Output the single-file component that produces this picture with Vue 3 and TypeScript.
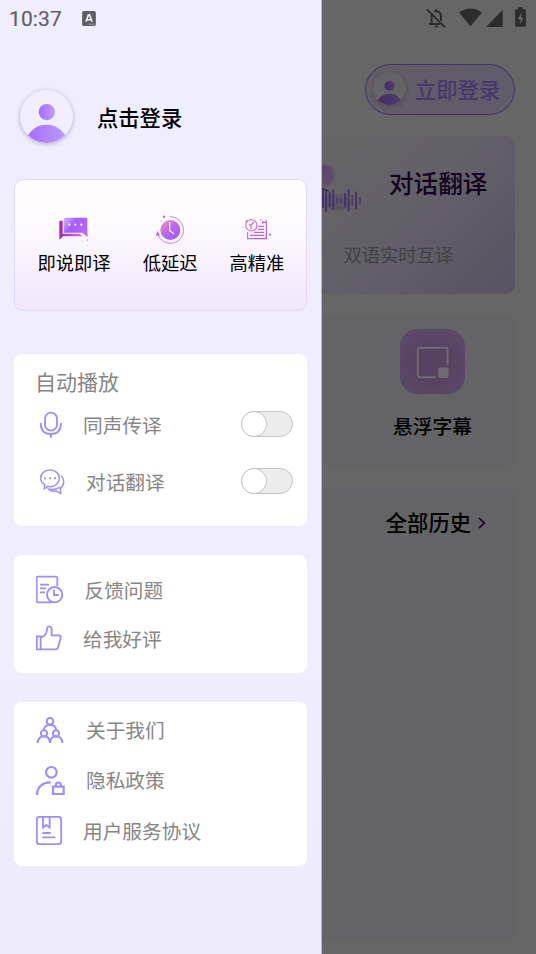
<script setup lang="ts">
import { ref } from 'vue'

interface Toggle {
  id: 'mic' | 'chat'
  label: string
}
interface Entry {
  id: string
  label: string
}

const toggles: Toggle[] = [
  { id: 'mic', label: '同声传译' },
  { id: 'chat', label: '对话翻译' },
]
const support: Entry[] = [
  { id: 'feedback', label: '反馈问题' },
  { id: 'rate', label: '给我好评' },
]
const legal: Entry[] = [
  { id: 'about', label: '关于我们' },
  { id: 'privacy', label: '隐私政策' },
  { id: 'terms', label: '用户服务协议' },
]
const enabled = ref<Record<Toggle['id'], boolean>>({ mic: false, chat: false })
</script>

<template>
  <div class="screen">
    <aside class="drawer">
      <div class="status">
        <span class="time">10:37</span>
        <svg class="lang" viewBox="0 0 42 46">
          <rect width="42" height="46" rx="5" fill="#5f5e66" />
          <path d="M12 33 19 12h4l7 21M14.500 27h13" fill="none" stroke="#f0edff" stroke-width="5" />
          <path d="M21 40.500h18" stroke="#d6d3e2" stroke-width="2.500" stroke-dasharray="3 1.500" />
        </svg>
      </div>

      <div class="profile">
        <svg class="avatar" viewBox="0 0 156 156">
          <defs>
            <linearGradient id="av" x1="0" y1="0" x2="1" y2="0">
              <stop offset="0" stop-color="#a66cfb" /><stop offset="1" stop-color="#bd9bff" />
            </linearGradient>
            <clipPath id="avc"><circle cx="78" cy="78" r="78" /></clipPath>
          </defs>
          <circle cx="79" cy="65" r="24" fill="url(#av)" />
          <path clip-path="url(#avc)" d="M20 140C34 114 52 102 78 102S122 114 138 140V160H20Z" fill="url(#av)" />
        </svg>
        <span class="profile-name">点击登录</span>
      </div>

      <section class="features">
        <div class="feature">
          <svg viewBox="147 132 90 90">
            <defs>
              <linearGradient id="c1" x1="0" y1="0" x2="1" y2=".6">
                <stop offset="0" stop-color="#d9b8fb" /><stop offset=".45" stop-color="#a45cfc" /><stop offset="1" stop-color="#b968f3" />
              </linearGradient>
              <linearGradient id="c2" x1="0" y1="0" x2="1" y2="0">
                <stop offset="0" stop-color="#a425b4" /><stop offset="1" stop-color="#d47be8" />
              </linearGradient>
            </defs>
            <path d="M148 155q0-3 3-3h7v39h51l9 8h-59l-11 10Z" fill="url(#c2)" />
            <path d="M165 143h63q4 0 4 4v53l-14-12h-57v-41q0-4 4-4Z" fill="url(#c1)" />
            <path d="M219 188h13v12Z" fill="#cf62dc" />
            <g fill="#fff"><circle cx="178" cy="164" r="3.200" /><circle cx="196" cy="164" r="3.200" /><circle cx="214" cy="164" r="3.200" /></g>
            <circle cx="233" cy="210" r="2" fill="#e486bd" />
          </svg>
          <span>即说即译</span>
        </div>
        <div class="feature">
          <svg viewBox="435 132 90 90">
            <defs>
              <linearGradient id="k1" x1="0" y1="0" x2=".8" y2="1">
                <stop offset="0" stop-color="#f49ac0" /><stop offset=".5" stop-color="#be69e6" /><stop offset="1" stop-color="#9a5cff" />
              </linearGradient>
            </defs>
            <circle cx="481" cy="180" r="30" fill="url(#k1)" />
            <path d="M479 157v25l13 9" fill="none" stroke="#fff" stroke-width="3.500" />
            <path d="M480 140A40 40 0 1 1 443 193" fill="none" stroke="#c58bea" stroke-width="3" />
            <path d="M438 197l4-14 8 13Z" fill="#b95bd8" />
            <circle cx="462" cy="140" r="3.500" fill="#b95bd8" /><circle cx="454" cy="153" r="2" fill="#d58be0" />
          </svg>
          <span>低延迟</span>
        </div>
        <div class="feature">
          <svg viewBox="695 132 90 90">
            <defs>
              <linearGradient id="l1" gradientUnits="userSpaceOnUse" x1="700" y1="145" x2="770" y2="210">
                <stop offset="0" stop-color="#e482b4" /><stop offset="1" stop-color="#a951ee" />
              </linearGradient>
            </defs>
            <g fill="none" stroke="url(#l1)" stroke-width="3.500">
              <circle cx="723" cy="166" r="17" />
              <path d="M731 156l-9 10v11M716 163l7 4" stroke-width="4" />
              <path d="M755 157h13v49h-56v-21M767 150v8M749 149h4M757 153v8" />
              <path d="M743 169h18M742 178h19M731 187h30M718 196h43" />
              <path d="M706 158l3-6h5" />
            </g>
            <circle cx="698" cy="172" r="2" fill="#dc86c8" /><circle cx="779" cy="194" r="3.200" fill="#b66be8" />
          </svg>
          <span>高精准</span>
        </div>
      </section>

      <section class="card autoplay">
        <h2>自动播放</h2>
        <div v-for="t in toggles" :key="t.id" class="row" :class="t.id">
          <svg v-if="t.id === 'mic'" class="icon" viewBox="78 195 90 90">
            <rect x="105" y="203" width="36" height="54" rx="18" />
            <path d="M92 234C92 257 105 267 122.500 267S153 257 153 234M122.500 267V278" />
          </svg>
          <svg v-else class="icon" viewBox="78 366 90 90">
            <path d="M103 431l1-12C95 413 92 407 92 400 92 386 103 375 120 375S148 386 148 400 136 425 120 425q-4 0-7-1Z" stroke-width="4.500" />
            <path d="M154 392C164 402 164 419 151 430l1 15-13-7q-14 2-22-5 20 2 32-6" stroke-width="4.500" />
            <g fill="#a08dfb" stroke="none"><circle cx="105" cy="400" r="3.300" /><circle cx="120" cy="400" r="3.300" /><circle cx="135" cy="400" r="3.300" /></g>
          </svg>
          <span class="label">{{ t.label }}</span>
          <button class="switch" :class="{ on: enabled[t.id] }" @click="enabled[t.id] = !enabled[t.id]"><i /></button>
        </div>
      </section>

      <section class="card support">
        <div v-for="e in support" :key="e.id" class="row" :class="e.id">
          <svg v-if="e.id === 'feedback'" class="icon" viewBox="78 75 90 90">
            <path d="M142 109V85q0-5-5-5H85q-5 0-5 5V152q0 5 5 5H126M90 104h27M90 115h19M90 127h15" />
            <circle cx="134" cy="134" r="23" /><path d="M132 119v16h14" />
          </svg>
          <svg v-else class="icon" viewBox="78 222 90 90">
            <path d="M80.500 259H92V298H80.500ZM92 263C105 258 111 250 111 237 111 225 125 228 125 238V256H147Q153 257 152 263L144 293Q142 298 137 298H92" />
          </svg>
          <span class="label">{{ e.label }}</span>
        </div>
      </section>

      <section class="card legal">
        <div v-for="e in legal" :key="e.id" class="row" :class="e.id">
          <svg v-if="e.id === 'about'" class="icon" viewBox="78 60 90 90">
            <g stroke-width="6"><circle cx="120" cy="79" r="10" /><circle cx="102" cy="115" r="9.500" /><circle cx="138" cy="115" r="9.500" />
            <path d="M101 105C103 96 110 89 120 89S137 96 139 105M83 144C84 131 91 124 102 124S119 132 120 144C121 132 127 124 138 124S156 131 157 144" /></g>
          </svg>
          <svg v-else-if="e.id === 'privacy'" class="icon" viewBox="78 210 90 90">
            <g stroke-width="6.500"><circle cx="124" cy="232" r="16" /><path d="M81 300C81 277 97 262 122 262M129 275H161V297H129ZM137 273C137 259 153 259 153 273" /></g>
          </svg>
          <svg v-else class="icon" viewBox="78 363 90 90">
            <rect x="80.500" y="365.500" width="73" height="82" rx="8" stroke-width="5.500" />
            <path d="M99 366V398L109 390 119 398V366M97 414h25M97 427h39" stroke-width="5.500" />
          </svg>
          <span class="label">{{ e.label }}</span>
        </div>
      </section>
    </aside>

    <main class="page">
      <div class="status-icons">
        <svg class="bell" viewBox="318 24 60 60">
          <path d="M321 28 375 82M327 72H360M335 72V50Q335 44 338 41M342 35Q348 32 355 35 363 39 363 49V63M349 28V34" fill="none" stroke="#2c2c2c" stroke-width="6" />
          <path d="M343 77h12q-2 6-6 6t-6-6Z" fill="#2c2c2c" />
        </svg>
        <svg class="wifi" viewBox="417 24 70 56"><path d="M417 37Q452 12 487 37L452 79Z" fill="#2c2c2c" /></svg>
        <svg class="signal" viewBox="498 29 52 52"><path d="M549 29V81H498Z" fill="#2c2c2c" /></svg>
        <svg class="battery" viewBox="585 21 33 61">
          <path d="M594 22h15v6h6q3 0 3 3v47q0 3-3 3H588q-3 0-3-3V31q0-3 3-3h6Z" fill="#2c2c2c" />
          <path d="M605 37 593 58h8v16l10-21h-8Z" fill="#666" />
        </svg>
      </div>

      <button class="login">
        <svg class="login-avatar" viewBox="0 0 100 100">
          <defs>
            <linearGradient id="lv"><stop offset="0" stop-color="#432b66" /><stop offset="1" stop-color="#4d3e6a" /></linearGradient>
            <clipPath id="lvc"><circle cx="50" cy="50" r="50" /></clipPath>
          </defs>
          <circle cx="50" cy="50" r="50" fill="#646367" />
          <circle cx="50" cy="42" r="15" fill="url(#lv)" />
          <path clip-path="url(#lvc)" d="M12 90C22 74 34 66 50 66S78 74 88 90V100H12Z" fill="url(#lv)" />
        </svg>
        <span>立即登录</span>
      </button>

      <section class="hero">
        <svg class="wave" viewBox="21 84 126 174">
          <defs>
            <linearGradient id="wv" x1="0" y1="0" x2="0" y2="1"><stop offset="0" stop-color="#59486b" /><stop offset="1" stop-color="#604f6b" /></linearGradient>
          </defs>
          <circle cx="26" cy="136" r="36" fill="#61596a" />
          <circle cx="24" cy="136" r="31" fill="url(#wv)" />
          <ellipse cx="65" cy="216" rx="43" ry="25" fill="#5e5667" />
          <path d="M21 176q12 2 20 8" stroke="#36204f" stroke-width="4" fill="none" />
          <g stroke="#46306a" stroke-width="5.500" stroke-linecap="round">
            <path d="M24 180V232M33 180V243M44 188V228M55 181V236M90 191V230M101 179V242M123 187V236" />
            <path d="M67 203V220M78 207V216M112 198V225M135 203V220" stroke="#4e3d66" />
          </g>
        </svg>
        <div class="hero-text">
          <h1>对话翻译</h1>
          <p>双语实时互译</p>
        </div>
      </section>

      <section class="tile">
        <svg class="tile-icon" viewBox="0 0 194 194">
          <defs>
            <radialGradient id="tg" cx=".5" cy=".55" r=".72">
              <stop offset=".35" stop-color="#584262" /><stop offset=".7" stop-color="#5a4666" /><stop offset="1" stop-color="#5d5067" />
            </radialGradient>
          </defs>
          <rect width="194" height="194" rx="52" fill="url(#tg)" />
          <path d="M142 109V62q0-6-6-6H59q-6 0-6 6V138q0 6 6 6H109" fill="none" stroke="#706a73" stroke-width="5.500" />
          <rect x="114" y="115" width="31" height="31" rx="6" fill="#706a73" />
        </svg>
        <span>悬浮字幕</span>
      </section>

      <section class="history">
        <span>全部历史</span>
        <svg viewBox="0 0 24 36"><path d="M3 3 19 18 3 33" fill="none" stroke="#260b2e" stroke-width="5.500" /></svg>
      </section>
    </main>
  </div>
</template>

<style>
body {
  background: #666;
}
</style>

<style scoped>
.screen {
  display: flex;
  width: 536px;
  height: 954px;
  overflow: hidden;
  font-family: Roboto, 'Noto Sans CJK SC', sans-serif;
}
.screen * {
  box-sizing: border-box;
}
svg {
  display: block;
  flex: none;
}
span,
h1,
h2,
p {
  margin: 0;
  white-space: nowrap;
}
.drawer {
  flex: none;
  width: 322px;
  height: 954px;
  padding: 0 14px;
  border-right: 1px solid #bbb7cb;
  background: linear-gradient(#f0edff 70%, #edeafc);
}
.status {
  display: flex;
  align-items: center;
  height: 36px;
  margin-left: -5px;
}
.time {
  width: 73px;
  padding-top: 1px;
  font-size: 21px;
  line-height: 36px;
  letter-spacing: 0.1px;
  color: #616068;
  -webkit-text-stroke: 0.2px #616068;
}
.lang {
  width: 14px;
  height: 15px;
}
.profile {
  display: flex;
  align-items: center;
  height: 53px;
  margin: 54px 0 0 6px;
}
.avatar {
  width: 53px;
  height: 53px;
  border-radius: 50%;
  background: #f2eefe;
  box-shadow: 0 1px 4px rgba(80, 70, 110, 0.4);
}
.profile-name {
  margin-left: 24px;
  font-size: 21.3px;
  font-weight: 500;
  color: #000;
}
.features {
  display: flex;
  width: 293px;
  height: 132px;
  margin-top: 36px;
  padding: 34px 0 0 22.5px;
  border: 1px solid #e6d7fc;
  border-radius: 9px;
  background: linear-gradient(#fffcfe 25%, #f2e6fc);
}
.feature {
  display: flex;
  flex-direction: column;
  align-items: center;
  margin-right: 32px;
  font-size: 18.3px;
  line-height: 40px;
  color: #000;
}
.feature svg {
  width: 30px;
  height: 30px;
}
.card {
  width: 293px;
  padding-left: 22px;
  border-radius: 8px;
  background: #fff;
  color: #868686;
}
.autoplay {
  height: 172px;
  margin-top: 43px;
  padding-top: 14px;
}
.autoplay h2 {
  margin-left: -1px;
  font-size: 21px;
  font-weight: 400;
  line-height: 30px;
}
.row {
  display: flex;
  align-items: center;
  height: 30px;
}
.icon {
  width: 30px;
  height: 30px;
  fill: none;
  stroke: #a08dfb;
  stroke-width: 5.5;
}
.label {
  margin-left: 20px;
  padding-top: 3px;
  font-size: 19.7px;
  font-weight: 400;
  line-height: 30px;
}
.mic {
  margin-top: 12px;
}
.chat {
  margin-top: 27px;
}
.mic .label,
.rate .label,
.terms .label {
  margin-left: 17px;
}
.feedback .label {
  margin-left: 18.5px;
}
.switch {
  display: flex;
  width: 52px;
  height: 26px;
  margin: -2px 14px 0 auto;
  padding: 0;
  border: 1px solid #c4c4c4;
  border-radius: 13px;
  background: #ececec;
}
.switch i {
  width: 26px;
  height: 26px;
  margin: -1px;
  border: 1px solid #c4c4c4;
  border-radius: 50%;
  background: #fff;
}
.switch.on {
  justify-content: flex-end;
  background: #a08dfb;
}
.support {
  height: 118px;
  margin-top: 29px;
  padding-top: 20px;
}
.rate {
  margin-top: 19px;
}
.legal {
  height: 164px;
  margin-top: 29px;
  padding-top: 13px;
}
.privacy {
  margin-top: 20px;
}
.terms {
  margin-top: 21px;
}
.page {
  flex: none;
  width: 214px;
  height: 954px;
  padding-right: 21px;
  background: #666;
}
.status-icons {
  display: flex;
  align-items: center;
  height: 36px;
  padding-left: 104px;
}
.bell {
  width: 20px;
  height: 20px;
}
.wifi {
  width: 23px;
  height: 19px;
  margin: -1px 4px 0 13px;
}
.signal {
  width: 17px;
  height: 17px;
}
.battery {
  width: 11px;
  height: 20px;
  margin: -2px 0 0 12px;
}
.login {
  display: flex;
  align-items: center;
  width: 150px;
  height: 51px;
  margin: 28px 0 0 auto;
  padding: 0 0 2px 7px;
  border: 1px solid #452f6e;
  border-radius: 26px;
  background: linear-gradient(100deg, #625d66, #615b6a);
  font-family: inherit;
  font-size: 21.3px;
  font-weight: 500;
  color: #48376f;
}
.login-avatar {
  width: 33px;
  height: 33px;
  margin: -1px 9px 0 0;
  border-radius: 50%;
  box-shadow: 0 2px 4px rgba(50, 40, 60, 0.3);
}
.hero {
  display: flex;
  height: 158px;
  margin-top: 21px;
  padding-top: 22px;
  border-radius: 0 9px 9px 0;
  background: linear-gradient(135deg, #666566 10%, #615e69 55%, #5b5462 90%);
}
.wave {
  width: 42px;
  height: 58px;
}
.hero-text {
  margin-left: -20.5px;
}
.hero h1 {
  margin: 9px 0 0 45.5px;
  font-size: 24.6px;
  font-weight: 500;
  line-height: 36px;
  color: #140320;
}
.hero p {
  margin-top: 39px;
  font-size: 18.3px;
  line-height: 28px;
  color: #424145;
}
.tile {
  display: flex;
  flex-direction: column;
  align-items: center;
  height: 151px;
  margin-top: 21px;
  padding: 14px 0 0 28px;
  border-radius: 0 9px 9px 0;
  background: #646467;
  font-size: 19.8px;
  font-weight: 500;
  line-height: 30px;
  color: #000;
}
.tile-icon {
  width: 65px;
  height: 65px;
  margin-bottom: 18.5px;
}
.history {
  display: flex;
  align-items: flex-start;
  justify-content: flex-end;
  height: 452px;
  margin-top: 22px;
  padding: 20px 29px 0 0;
  border-radius: 0 9px 9px 0;
  background: #646467;
  font-size: 21.3px;
  font-weight: 500;
  line-height: 32px;
  color: #000;
}
.history svg {
  width: 8px;
  height: 12px;
  margin: 9px 0 0 7px;
}
</style>
